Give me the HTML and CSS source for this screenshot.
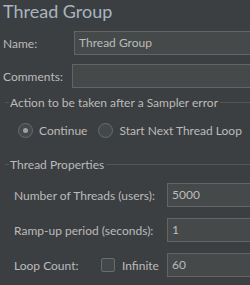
FILE: index.html
```html
<!DOCTYPE html>
<html lang="en">
<head>
    <meta charset="UTF-8">
    <title>Thread Group</title>
    <link rel="stylesheet" href="styles.css">
</head>
<body>
    <div class="panel">
        <h1 class="title">Thread Group</h1>

        <div class="row row-name">
            <label class="label">Name:</label>
            <div class="field">Thread Group</div>
        </div>
        <div class="row row-comments">
            <label class="label">Comments:</label>
            <div class="field"></div>
        </div>

        <!-- Sampler error section -->
        <div class="section-head">
            <span class="stub"></span>
            <span class="section-title">Action to be taken after a Sampler error</span>
            <span class="line"></span>
        </div>
        <div class="radios">
            <span class="radio checked"></span>
            <span class="radio-text">Continue</span>
            <span class="radio"></span>
            <span class="radio-text">Start Next Thread Loop</span>
        </div>

        <!-- Thread properties section -->
        <div class="section-head props-head">
            <span class="stub"></span>
            <span class="section-title">Thread Properties</span>
            <span class="line"></span>
        </div>
        <div class="props">
            <div class="prop">
                <span class="prop-label">Number of Threads (users):</span>
                <div class="field">5000</div>
            </div>
            <div class="prop">
                <span class="prop-label">Ramp-up period (seconds):</span>
                <div class="field">1</div>
            </div>
            <div class="prop">
                <span class="prop-label">
                    <span class="loop-text">Loop Count:</span>
                    <span class="checkbox"></span>
                    <span>Infinite</span>
                </span>
                <div class="field">60</div>
            </div>
        </div>
    </div>
</body>
</html>
```

FILE: styles.css
```css
html, body {
    margin: 0;
    padding: 0;
    background-color: #3c3f41;
    overflow: hidden;
}
body {
    font-family: Lato, "Noto Sans", sans-serif;
    font-size: 12px;
    color: #bbbbbb;
    white-space: nowrap;
}
.panel {
    width: 250px;
    height: 285px;
    overflow: hidden;
}
.title {
    margin: 0;
    padding: 0 0 0 3px;
    height: 22px;
    line-height: 22px;
    font-size: 18px;
    font-weight: normal;
    color: #a9b4c0;
}
.row {
    display: flex;
    align-items: center;
    height: 24px;
    margin-right: -20px;
}
.row-name {
    margin-top: 9px;
}
.row-comments {
    margin-top: 9px;
}
.label {
    padding-left: 3px;
    flex: none;
}
.row-name .label {
    width: 71px;
}
.row-comments .label {
    width: 69px;
}
.field {
    flex: 1;
    height: 22px;
    line-height: 22px;
    padding-left: 4px;
    background-color: #45494a;
    border: 1px solid #646464;
    color: #bbbbbb;
}
.section-head {
    display: flex;
    align-items: center;
    height: 16px;
    margin-top: 6px;
}
.stub {
    width: 4px;
    height: 1px;
    margin-left: 5px;
    background-color: #555555;
}
.section-title {
    padding: 0 2px 0 1px;
    color: #bbbbbb;
}
.line {
    flex: 1;
    height: 1px;
    background-color: #555555;
}
.radios {
    display: flex;
    align-items: center;
    height: 17px;
    margin-top: 12px;
    padding-left: 18px;
}
.radio {
    width: 13px;
    height: 13px;
    border: 1px solid #6b6b6b;
    border-radius: 50%;
    background-color: #43494a;
    position: relative;
    flex: none;
}
.radio.checked::after {
    content: "";
    position: absolute;
    left: 4px;
    top: 4px;
    width: 5px;
    height: 5px;
    border-radius: 50%;
    background-color: #a0a0a0;
}
.radio-text {
    margin-left: 6px;
    margin-right: 11px;
}
.props-head {
    margin-top: 17px;
}
.props {
    margin-top: 11px;
    margin-right: -20px;
}
.prop {
    display: flex;
    align-items: center;
    height: 24px;
    margin-bottom: 11px;
}
.prop-label {
    width: 153px;
    padding-left: 14px;
    display: flex;
    align-items: center;
    flex: none;
}
.loop-text {
    width: 87px;
}
.checkbox {
    width: 12px;
    height: 12px;
    border: 1px solid #6b6b6b;
    border-radius: 2px;
    background-color: #43494a;
    margin-right: 7px;
    flex: none;
}
```
